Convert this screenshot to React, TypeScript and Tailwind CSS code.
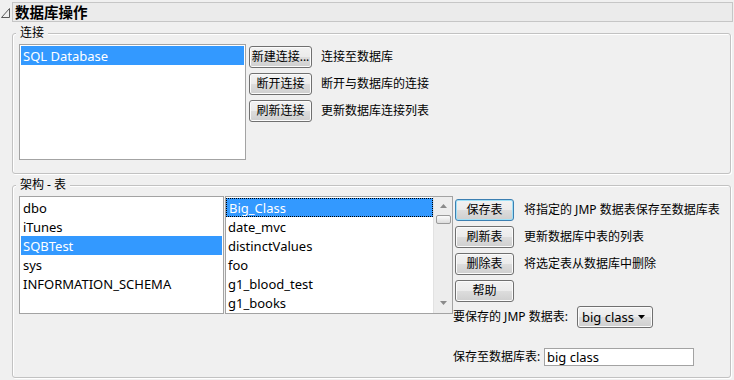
import React from "react";

function Btn({ label, className = "", focus = false }: { label: string; className?: string; focus?: boolean }) {
  return (
    <div
      className={`h-[22px] flex items-center justify-center rounded-[3px] border text-[12px] leading-none text-black bg-[linear-gradient(#f2f2f2_0%,#ebebeb_50%,#dddddd_50%,#cfcfcf_100%)] ${
        focus ? "border-[#3c7fb1] shadow-[inset_0_0_0_1px_#9fe0f7]" : "border-[#707070] shadow-[inset_0_0_0_1px_#fbfbfb]"
      } ${className}`}
    >
      {label}
    </div>
  );
}

function Group({ label, className = "", children }: { label: string; className?: string; children: React.ReactNode }) {
  return (
    <div className={`relative rounded-[3px] border border-[#c2c2c2] shadow-[inset_1px_1px_0_#ffffff,1px_1px_0_#ffffff] ${className}`}>
      <span className="absolute left-[3px] top-[-8px] px-[4px] bg-[#f0f0f0] text-[12px] leading-[14px] text-black">{label}</span>
      {children}
    </div>
  );
}

function Row({ text, selected = false, focus = false }: { text: string; selected?: boolean; focus?: boolean }) {
  return (
    <div
      className={`h-[19px] flex items-center pl-[2px] pt-[2px] text-[13px] leading-none whitespace-nowrap ${
        selected ? "bg-[#3399ff] text-white" : "text-black"
      } ${focus ? "border border-dotted border-black pl-[1px] pt-[1px]" : ""}`}
    >
      {text}
    </div>
  );
}

export default function App() {
  const conn = [
    { b: "新建连接...", d: "连接至数据库" },
    { b: "断开连接", d: "断开与数据库的连接" },
    { b: "刷新连接", d: "更新数据库连接列表" },
  ];
  const tbtn = [
    { b: "保存表", d: "将指定的 JMP 数据表保存至数据库表", f: true },
    { b: "刷新表", d: "更新数据库中表的列表", f: false },
    { b: "删除表", d: "将选定表从数据库中删除", f: false },
    { b: "帮助", d: "", f: false },
  ];
  return (
    <div className="w-[734px] h-[380px] bg-[#f0f0f0] overflow-hidden font-['Noto_Sans','Noto_Sans_CJK_SC',sans-serif] text-black">
      {/* header */}
      <div className="flex items-start pt-[2px]">
        <div className="w-[12px] h-[20px]">
          <svg width="12" height="20" viewBox="0 0 12 20">
            <path d="M9.5 6.5 L9.5 15.5 L1.5 15.5 Z" fill="none" stroke="#5a5a5a" strokeWidth="1" />
          </svg>
        </div>
        <div className="w-[721px] h-[20px] border border-[#c6c6c6] bg-[#ebebeb] flex items-center pl-[2px] font-bold text-[14.5px] leading-none">
          数据库操作
        </div>
      </div>

      {/* 连接 */}
      <Group label="连接" className="ml-[12px] mt-[11px] w-[719px] h-[141px]">
        <div className="flex items-start pt-[10px] pl-[6px]">
          <div className="w-[227px] h-[116px] bg-white border border-[#a3a3a3] p-[1px]">
            <Row text="SQL Database" selected />
          </div>
          <div className="ml-[3px] mt-[2px] flex flex-col gap-[5px]">
            {conn.map((c) => (
              <div key={c.b} className="flex items-center">
                <Btn label={c.b} className="w-[63px]" />
                <span className="ml-[9px] text-[12px] leading-none whitespace-nowrap">{c.d}</span>
              </div>
            ))}
          </div>
        </div>
      </Group>

      {/* 架构 - 表 */}
      <Group label="架构 - 表" className="ml-[12px] mt-[11px] w-[719px] h-[193px]">
        <div className="flex items-start pt-[10px] pl-[6px]">
          <div className="w-[205px] h-[118px] bg-white border border-[#a3a3a3] p-[1px]">
            <Row text="dbo" />
            <Row text="iTunes" />
            <Row text="SQBTest" selected />
            <Row text="sys" />
            <Row text="INFORMATION_SCHEMA" />
          </div>
          <div className="ml-[1px] w-[228px] h-[118px] bg-white border border-[#a3a3a3] flex">
            <div className="w-[207px] pt-[1px] overflow-hidden">
              <Row text="Big_Class" selected focus />
              <Row text="date_mvc" />
              <Row text="distinctValues" />
              <Row text="foo" />
              <Row text="g1_blood_test" />
              <Row text="g1_books" />
            </div>
            <div className="w-[19px] flex flex-col items-center bg-[#ededed] border-l border-[#e2e2e2]">
              <svg className="mt-[7px]" width="7" height="4" viewBox="0 0 7 4">
                <path d="M3.5 0 L7 4 L0 4 Z" fill="#8a8a8a" />
              </svg>
              <div className="mt-[7px] w-[15px] h-[9px] rounded-[2px] border border-[#9a9a9a] bg-[linear-gradient(#fbfbfb,#dcdcdc)]" />
              <div className="flex-1" />
              <svg className="mb-[8px]" width="7" height="4" viewBox="0 0 7 4">
                <path d="M0 0 L7 0 L3.5 4 Z" fill="#8a8a8a" />
              </svg>
            </div>
          </div>
          <div className="flex flex-col pt-[3px]">
            <div className="flex flex-col gap-[5px] pl-[2px]">
              {tbtn.map((t) => (
                <div key={t.b} className="flex items-center">
                  <Btn label={t.b} className="w-[59px]" focus={t.f} />
                  {t.d && <span className="ml-[10px] text-[12px] leading-none whitespace-nowrap">{t.d}</span>}
                </div>
              ))}
            </div>
            <div className="mt-[4px] h-[22px] flex items-center">
              <span className="w-[124px] text-[12px] leading-none whitespace-nowrap">要保存的 JMP 数据表:</span>
              <div className="w-[76px] h-[22px] flex items-center rounded-[3px] border border-[#707070] shadow-[inset_0_0_0_1px_#fbfbfb] bg-[linear-gradient(#f2f2f2_0%,#ebebeb_50%,#dddddd_50%,#cfcfcf_100%)] pl-[4px] pr-[7px]">
                <span className="text-[13px] leading-none whitespace-nowrap">big class</span>
                <div className="flex-1" />
                <svg width="7" height="4" viewBox="0 0 7 4">
                  <path d="M0 0 L7 0 L3.5 4 Z" fill="#000" />
                </svg>
              </div>
            </div>
            <div className="mt-[20px] h-[18px] flex items-center">
              <span className="w-[91px] text-[12px] leading-none whitespace-nowrap">保存至数据库表:</span>
              <div className="w-[150px] h-[18px] bg-white border border-[#a3a3a3] flex items-center pl-[2px]">
                <span className="text-[13px] leading-none whitespace-nowrap">big class</span>
              </div>
            </div>
          </div>
        </div>
      </Group>
    </div>
  );
}
